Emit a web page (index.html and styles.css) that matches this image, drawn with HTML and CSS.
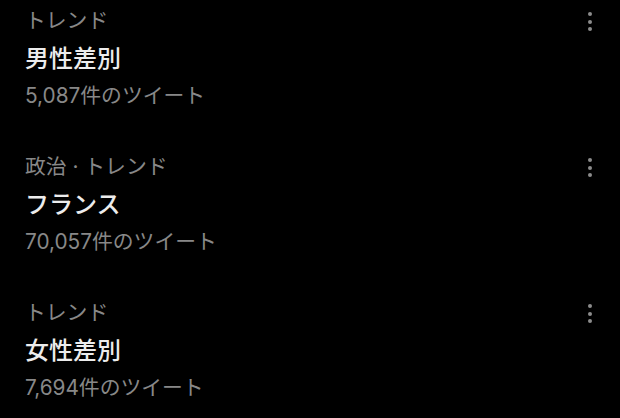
FILE: index.html
```html
<!DOCTYPE html>
<html lang="ja">
<head>
<meta charset="utf-8">
<link rel="stylesheet" href="styles.css">
</head>
<body>
<ul class="trends">
  <li class="trend">
    <div class="info">
      <div class="meta">トレンド</div>
      <div class="title">男性差別</div>
      <div class="count">5,087件のツイート</div>
    </div>
    <span class="more"><i></i><i></i><i></i></span>
  </li>
  <li class="trend">
    <div class="info">
      <div class="meta">政治 · トレンド</div>
      <div class="title">フランス</div>
      <div class="count">70,057件のツイート</div>
    </div>
    <span class="more"><i></i><i></i><i></i></span>
  </li>
  <li class="trend">
    <div class="info">
      <div class="meta">トレンド</div>
      <div class="title">女性差別</div>
      <div class="count">7,694件のツイート</div>
    </div>
    <span class="more"><i></i><i></i><i></i></span>
  </li>
</ul>
</body>
</html>
```
FILE: styles.css
```css
html, body {
  margin: 0;
  padding: 0;
  background: #000;
}
body {
  width: 620px;
  height: 418px;
  overflow: hidden;
  font-family: Inter, "Noto Sans CJK JP", sans-serif;
}
.trends {
  list-style: none;
  margin: 0;
  padding: 6px 0 0;
  display: flex;
  flex-direction: column;
  gap: 42px;
}
.trend {
  display: flex;
  justify-content: space-between;
  align-items: flex-start;
  padding: 0 26px 0 25px;
}
.meta {
  font-size: 20.8px;
  line-height: 30px;
  color: #888;
}
.title {
  font-size: 24px;
  line-height: 46px;
  font-weight: 500;
  color: #ececec;
}
.count {
  font-size: 20.8px;
  line-height: 28px;
  color: #888;
}
.more {
  display: flex;
  flex-direction: column;
  align-items: center;
  gap: 3.5px;
  width: 8px;
  padding-top: 6px;
}
.more i {
  display: block;
  width: 4px;
  height: 4px;
  border-radius: 50%;
  background: #8c8c8c;
}
```
